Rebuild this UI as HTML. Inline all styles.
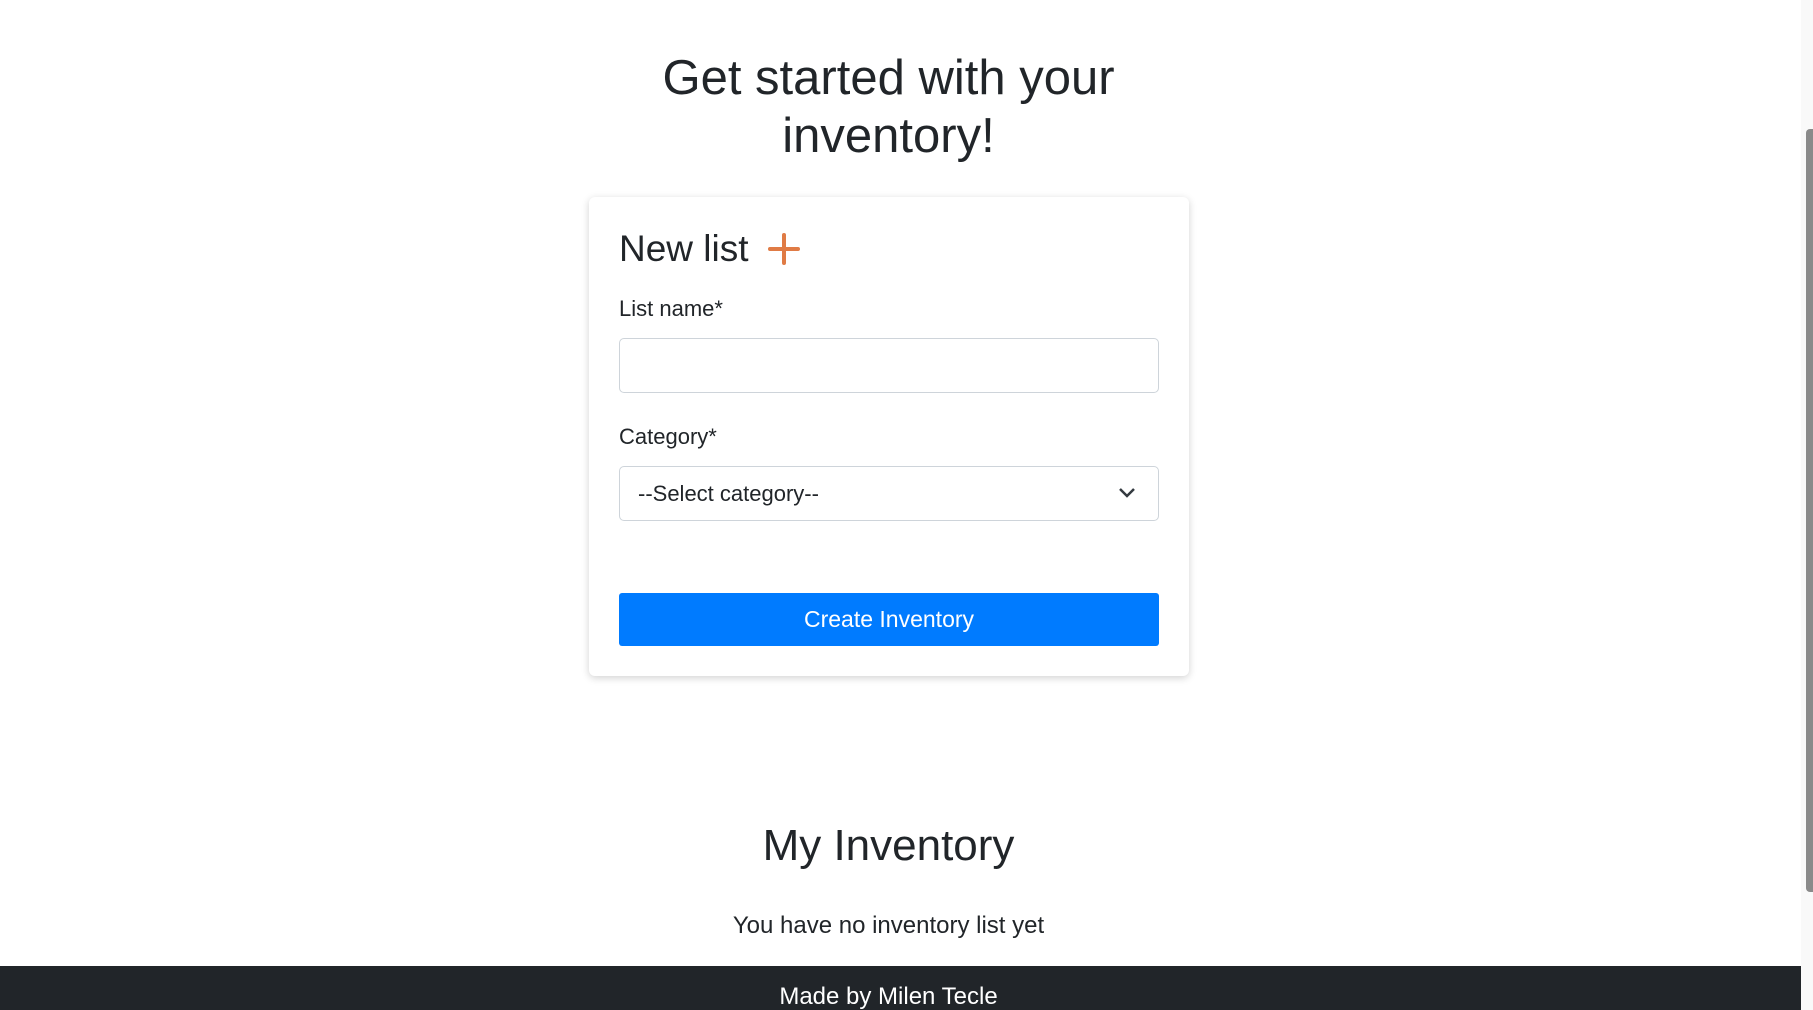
<!DOCTYPE html>
<html><head><style>
body{margin:0;width:1813px;height:1010px;overflow:hidden;background:#fff;font-family:"Liberation Sans",sans-serif;color:#212529;position:relative}
.a{position:absolute}
h1{position:absolute;left:0;width:1777px;top:49px;margin:0;text-align:center;font-size:49px;font-weight:500;line-height:58px}
.card{left:589px;top:197px;width:600px;height:479px;border-radius:6px;box-shadow:0 2px 8px rgba(0,0,0,.18);background:#fff}
.lbl{font-size:22px}
.inp{left:619px;width:538px;height:53px;border:1px solid #ced4da;border-radius:5px}
</style></head><body>
<h1>Get started with your<br>inventory!</h1>
<div class="a card"></div>
<div class="a" style="left:619px;top:228px;font-size:37px;font-weight:500">New list</div>
<svg class="a" style="left:767px;top:232px" width="34" height="34" viewBox="0 0 34 34"><path d="M17 3V31M3 17H31" stroke="#e07b45" stroke-width="4" stroke-linecap="round"/></svg>
<div class="a lbl" style="left:619px;top:296px">List name*</div>
<div class="a inp" style="top:338px"></div>
<div class="a lbl" style="left:619px;top:424px">Category*</div>
<div class="a inp" style="top:466px"></div>
<div class="a" style="left:638px;top:481px;font-size:22px;color:#212529">--Select category--</div>
<svg class="a" style="left:1118px;top:487px" width="18" height="12" viewBox="0 0 18 12"><path d="M2 2L9 9L16 2" stroke="#343a40" stroke-width="2.5" fill="none"/></svg>
<div class="a" style="left:619px;top:593px;width:540px;height:53px;background:#007bff;border-radius:3px;color:#fff;font-size:23px;text-align:center;line-height:53px">Create Inventory</div>
<div class="a" style="left:0;width:1777px;top:821px;text-align:center;font-size:44px;font-weight:500">My Inventory</div>
<div class="a" style="left:0;width:1777px;top:912px;text-align:center;font-size:24px">You have no inventory list yet</div>
<div class="a" style="left:0;top:966px;width:1801px;height:44px;background:#212529"></div>
<div class="a" style="left:0;top:966px;width:1777px;color:#fff;text-align:center;font-size:24px;line-height:62px;height:44px;overflow:hidden">Made by Milen Tecle</div>
<div class="a" style="left:1801px;top:0;width:12px;height:1010px;background:#f9f9f9"></div>
<div class="a" style="left:1806px;top:129px;width:7px;height:763px;background:#8a8a8a;border-radius:4px 0 0 4px"></div>
</body></html>
